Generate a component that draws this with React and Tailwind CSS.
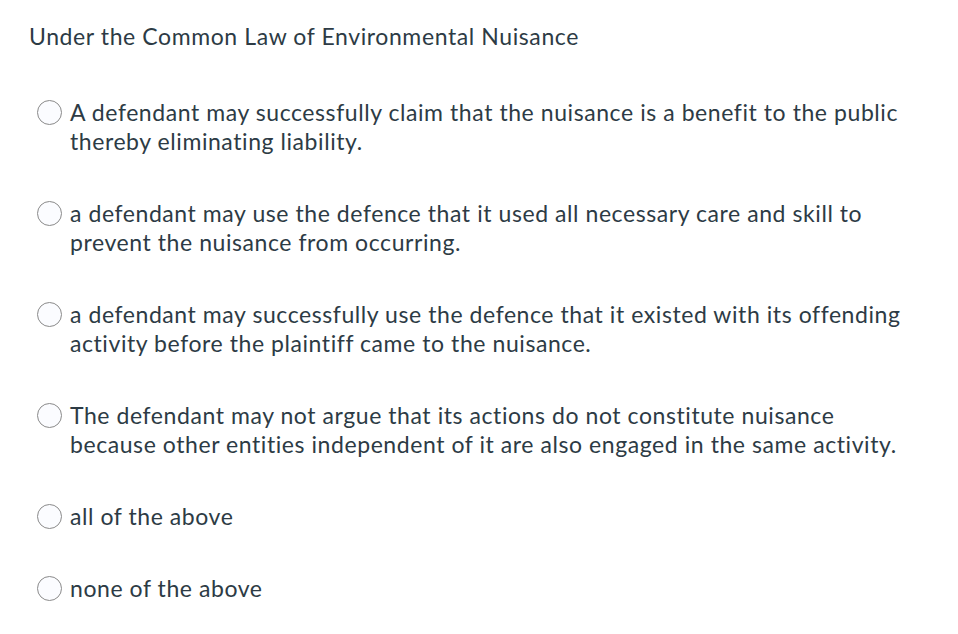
export default function App() {
  const options = [
    ["A defendant may successfully claim that the nuisance is a benefit to the public", "thereby eliminating liability."],
    ["a defendant may use the defence that it used all necessary care and skill to", "prevent the nuisance from occurring."],
    ["a defendant may successfully use the defence that it existed with its offending", "activity before the plaintiff came to the nuisance."],
    ["The defendant may not argue that its actions do not constitute nuisance", "because other entities independent of it are also engaged in the same activity."],
    ["all of the above"],
    ["none of the above"],
  ];
  return (
    <div
      className="w-[958px] h-[634px] bg-white text-[#2d3b45] tracking-[0.57px]"
      style={{ fontFamily: "Lato, 'Open Sans', sans-serif", fontVariantLigatures: "none" }}
    >
      <div className="pl-[29px] pt-[22px] text-[23px] leading-[29px] tracking-[0.6px]">Under the Common Law of Environmental Nuisance</div>
      <div className="flex flex-col gap-[43px] pt-[47px]">
        {options.map((lines, i) => (
          <div key={i} className="flex items-start pl-[37px]">
            <div className="mt-[2px] w-[25px] h-[25px] rounded-full border border-[#8a8a8a] bg-[#fbfcff] shrink-0" />
            <div className="ml-[8px] text-[23px] leading-[29px]">
              {lines.map((l, j) => (
                <div key={j} className="whitespace-nowrap">{l}</div>
              ))}
            </div>
          </div>
        ))}
      </div>
    </div>
  );
}
